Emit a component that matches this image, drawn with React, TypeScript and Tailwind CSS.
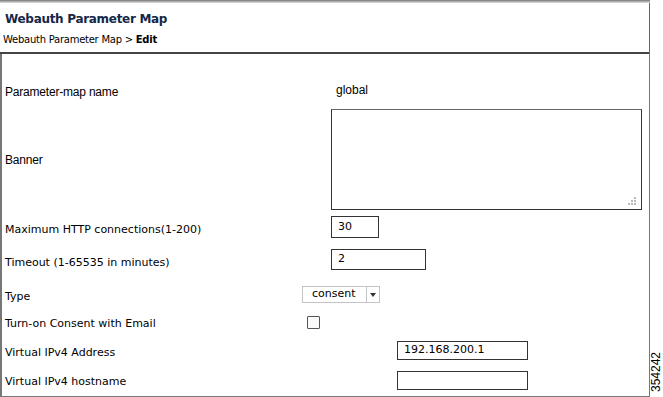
import React from "react";

const Row: React.FC<{
  label: string;
  row: string;
  lab?: string;
  children?: React.ReactNode;
  arial?: boolean;
}> = ({ label, row, lab = "", children, arial }) => (
  <div className={`flex items-center ${row}`}>
    <div
      className={`relative w-[297px] shrink-0 pl-[3px] leading-[14px] ${lab} ${
        arial ? "font-['Liberation_Sans',sans-serif] text-[12px] tracking-[-0.2px]" : "text-[11px]"
      }`}
    >
      {label}
    </div>
    <div className="flex items-center">{children}</div>
  </div>
);

export default function App() {
  return (
    <div className="relative w-[663px] h-[397px] bg-white font-['DejaVu_Sans',sans-serif] text-black overflow-hidden">
      <div className="h-[3px] bg-gradient-to-b from-[#777] to-[#e5e5e5] w-[650px]" />
      <div className="w-[650px] border-r border-[#666]">
        <div className="pl-[5px] pt-[8px] leading-[16px] text-[12px] font-bold text-[#142848] tracking-[-0.3px]">
          Webauth Parameter Map
        </div>
        <div className="pl-[3px] pt-[7px] leading-[12px] text-[10px] tracking-[-0.25px]">
          Webauth Parameter Map &gt; <span className="font-bold">Edit</span>
        </div>
        <div className="mt-[6px] h-[2px] bg-[#444]" />
      </div>
      <div className="w-[650px] h-[343px] border-l-2 border-r border-b border-[#777] pt-[29px]">
        <Row label="Parameter-map name" row="h-[18px]" arial>
          <span className="ml-[37px] mt-[-5px] font-['Liberation_Sans',sans-serif] text-[12px]">global</span>
        </Row>
        <Row label="Banner" row="mt-[8px]" arial>
          <div className="ml-[32px] relative w-[311px] h-[101px] border border-[#333] border-t-[#666]">
            <div className="absolute right-[5px] bottom-[4px] grid grid-cols-3 gap-[1px]">
              <span />
              <span />
              <span className="w-[2px] h-[2px] bg-[#bbb]" />
              <span />
              <span className="w-[2px] h-[2px] bg-[#bbb]" />
              <span className="w-[2px] h-[2px] bg-[#bbb]" />
              <span className="w-[2px] h-[2px] bg-[#bbb]" />
              <span className="w-[2px] h-[2px] bg-[#bbb]" />
              <span className="w-[2px] h-[2px] bg-[#bbb]" />
            </div>
          </div>
        </Row>
        <Row label="Maximum HTTP connections(1-200)" row="mt-[6px]" lab="top-[3px]">
          <div className="ml-[32px] w-[48px] h-[22px] border border-[#333] flex items-center pl-[6px] text-[11px]">
            30
          </div>
        </Row>
        <Row label="Timeout (1-65535 in minutes)" row="mt-[11px]" lab="top-[3px]">
          <div className="ml-[32px] w-[95px] h-[21px] border border-[#333] flex items-center pl-[6px] text-[11px]">
            2
          </div>
        </Row>
        <Row label="Type" row="mt-[16px]" lab="top-[2px]">
          <div className="ml-[3px] flex h-[17px] border border-[#c4c4c4] text-[11px]">
            <div className="w-[64px] flex items-center pl-[9px] border-r border-[#c4c4c4]">consent</div>
            <div className="w-[12px] flex items-center justify-center">
              <svg width="6" height="4" viewBox="0 0 6 4">
                <path d="M0 0h6L3 4z" fill="#333" />
              </svg>
            </div>
          </div>
        </Row>
        <Row label="Turn-on Consent with Email" row="mt-[13px] h-[13px]" lab="top-[1px]">
          <div className="ml-[8px] w-[13px] h-[13px] border border-[#555] rounded-[1px] bg-[#fafafa]" />
        </Row>
        <Row label="Virtual IPv4 Address" row="mt-[12px]" lab="top-[2px]">
          <div className="ml-[98px] w-[131px] h-[19px] border border-[#333] flex items-center pl-[6px] text-[11px]">
            192.168.200.1
          </div>
        </Row>
        <Row label="Virtual IPv4 hostname" row="mt-[11px]" lab="top-[1px]">
          <div className="ml-[98px] w-[131px] h-[19px] border border-[#333]" />
        </Row>
      </div>
      <div className="absolute left-[650px] top-[392px] origin-top-left -rotate-90 font-['Liberation_Sans',sans-serif] text-[12px] leading-[13px] whitespace-nowrap">
        354242
      </div>
    </div>
  );
}
